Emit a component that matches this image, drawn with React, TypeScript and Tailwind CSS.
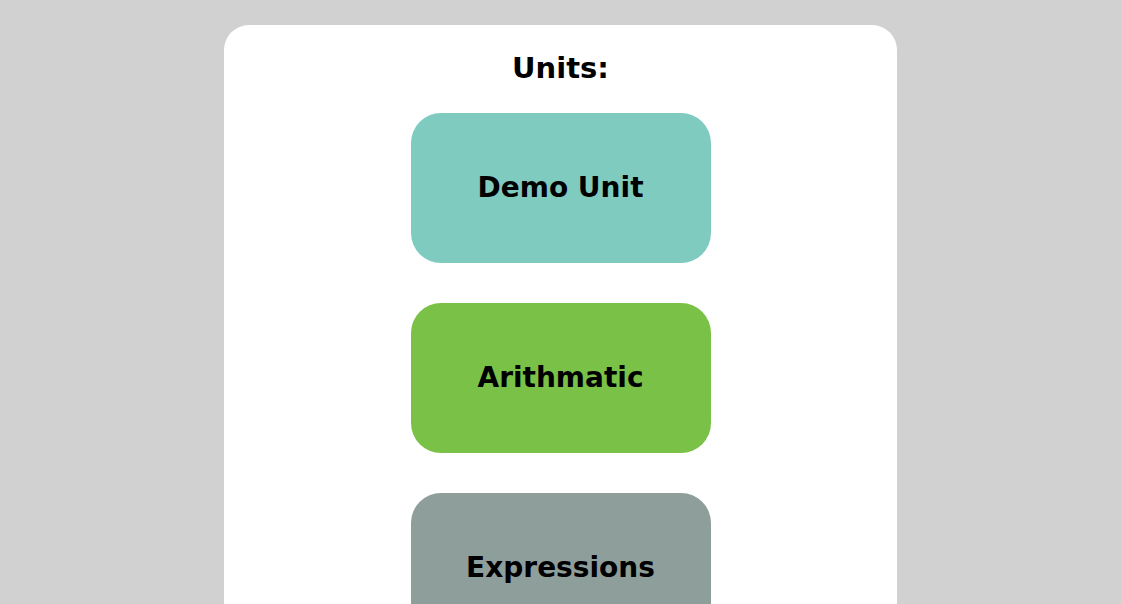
export default function App() {
  const units = [
    { name: "Demo Unit", bg: "bg-[#80cbc0]" },
    { name: "Arithmatic", bg: "bg-[#79c247]" },
    { name: "Expressions", bg: "bg-[#8e9e9b]" },
  ];
  return (
    <div className="min-h-screen bg-[#d1d1d1] pt-[25px] overflow-hidden h-[604px]" style={{ fontFamily: '"DejaVu Sans", sans-serif' }}>
      <div className="w-[673px] bg-white rounded-[25px] pt-[22px] pb-10 flex flex-col items-center ml-[224px]">
        <h1 className="text-[29px] font-bold text-black leading-[42px]">Units:</h1>
        <div className="mt-[24px] flex flex-col gap-10">
          {units.map((u) => (
            <div key={u.name} className={`${u.bg} w-[300px] h-[150px] rounded-[30px] flex items-center justify-center`}>
              <span className="text-[28px] font-bold text-black leading-none">{u.name}</span>
            </div>
          ))}
        </div>
      </div>
    </div>
  );
}
